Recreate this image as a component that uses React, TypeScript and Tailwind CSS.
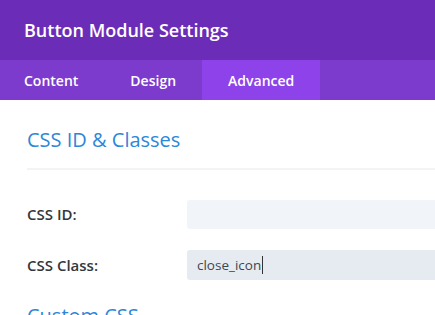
import React from "react";

export default function App(): React.JSX.Element {
  return (
    <div
      className="w-[435px] h-[315px] overflow-hidden bg-white"
      style={{ fontFamily: '"Open Sans", "Noto Sans", sans-serif' }}
    >
      {/* Header */}
      <div className="h-[60px] bg-[#6b2db8] px-[24px] flex items-center">
        <h1 className="text-[18px] font-semibold text-white">Button Module Settings</h1>
      </div>

      {/* Tabs */}
      <div className="h-[40px] bg-[#7d3bcd] flex text-[14px] font-semibold text-white">
        <div className="pl-[24px] pr-[26px] flex items-center">Content</div>
        <div className="px-[26px] flex items-center">Design</div>
        <div className="px-[26px] flex items-center bg-[#8d42ea]">Advanced</div>
      </div>

      {/* Body */}
      <div className="pl-[27px]">
        <div className="pt-[26px] pb-[14px] border-b-2 border-[#f1f3f5]">
          <h2 className="text-[20px] leading-[28px] text-[#2b87da]">CSS ID &amp; Classes</h2>
        </div>

        <div className="mt-[30px] flex flex-col gap-[21px]">
          <div className="flex items-center">
            <label className="w-[160px] text-[15px] font-semibold text-[#32373c]">CSS ID:</label>
            <div className="flex-1 h-[29px] rounded-l-[3px] bg-[#f1f5f9]" />
          </div>
          <div className="flex items-center">
            <label className="w-[160px] text-[15px] font-semibold text-[#32373c]">CSS Class:</label>
            <div className="flex-1 h-[30px] rounded-l-[3px] bg-[#e6ebf1] flex items-center pl-[10px] text-[13.5px] text-[#3e4650]">
              <span>close_icon</span>
              <span className="w-px h-[18px] bg-[#333] ml-px" />
            </div>
          </div>
        </div>

        <h2 className="mt-[22px] text-[20px] leading-[28px] text-[#2b87da]">Custom CSS</h2>
      </div>
    </div>
  );
}
